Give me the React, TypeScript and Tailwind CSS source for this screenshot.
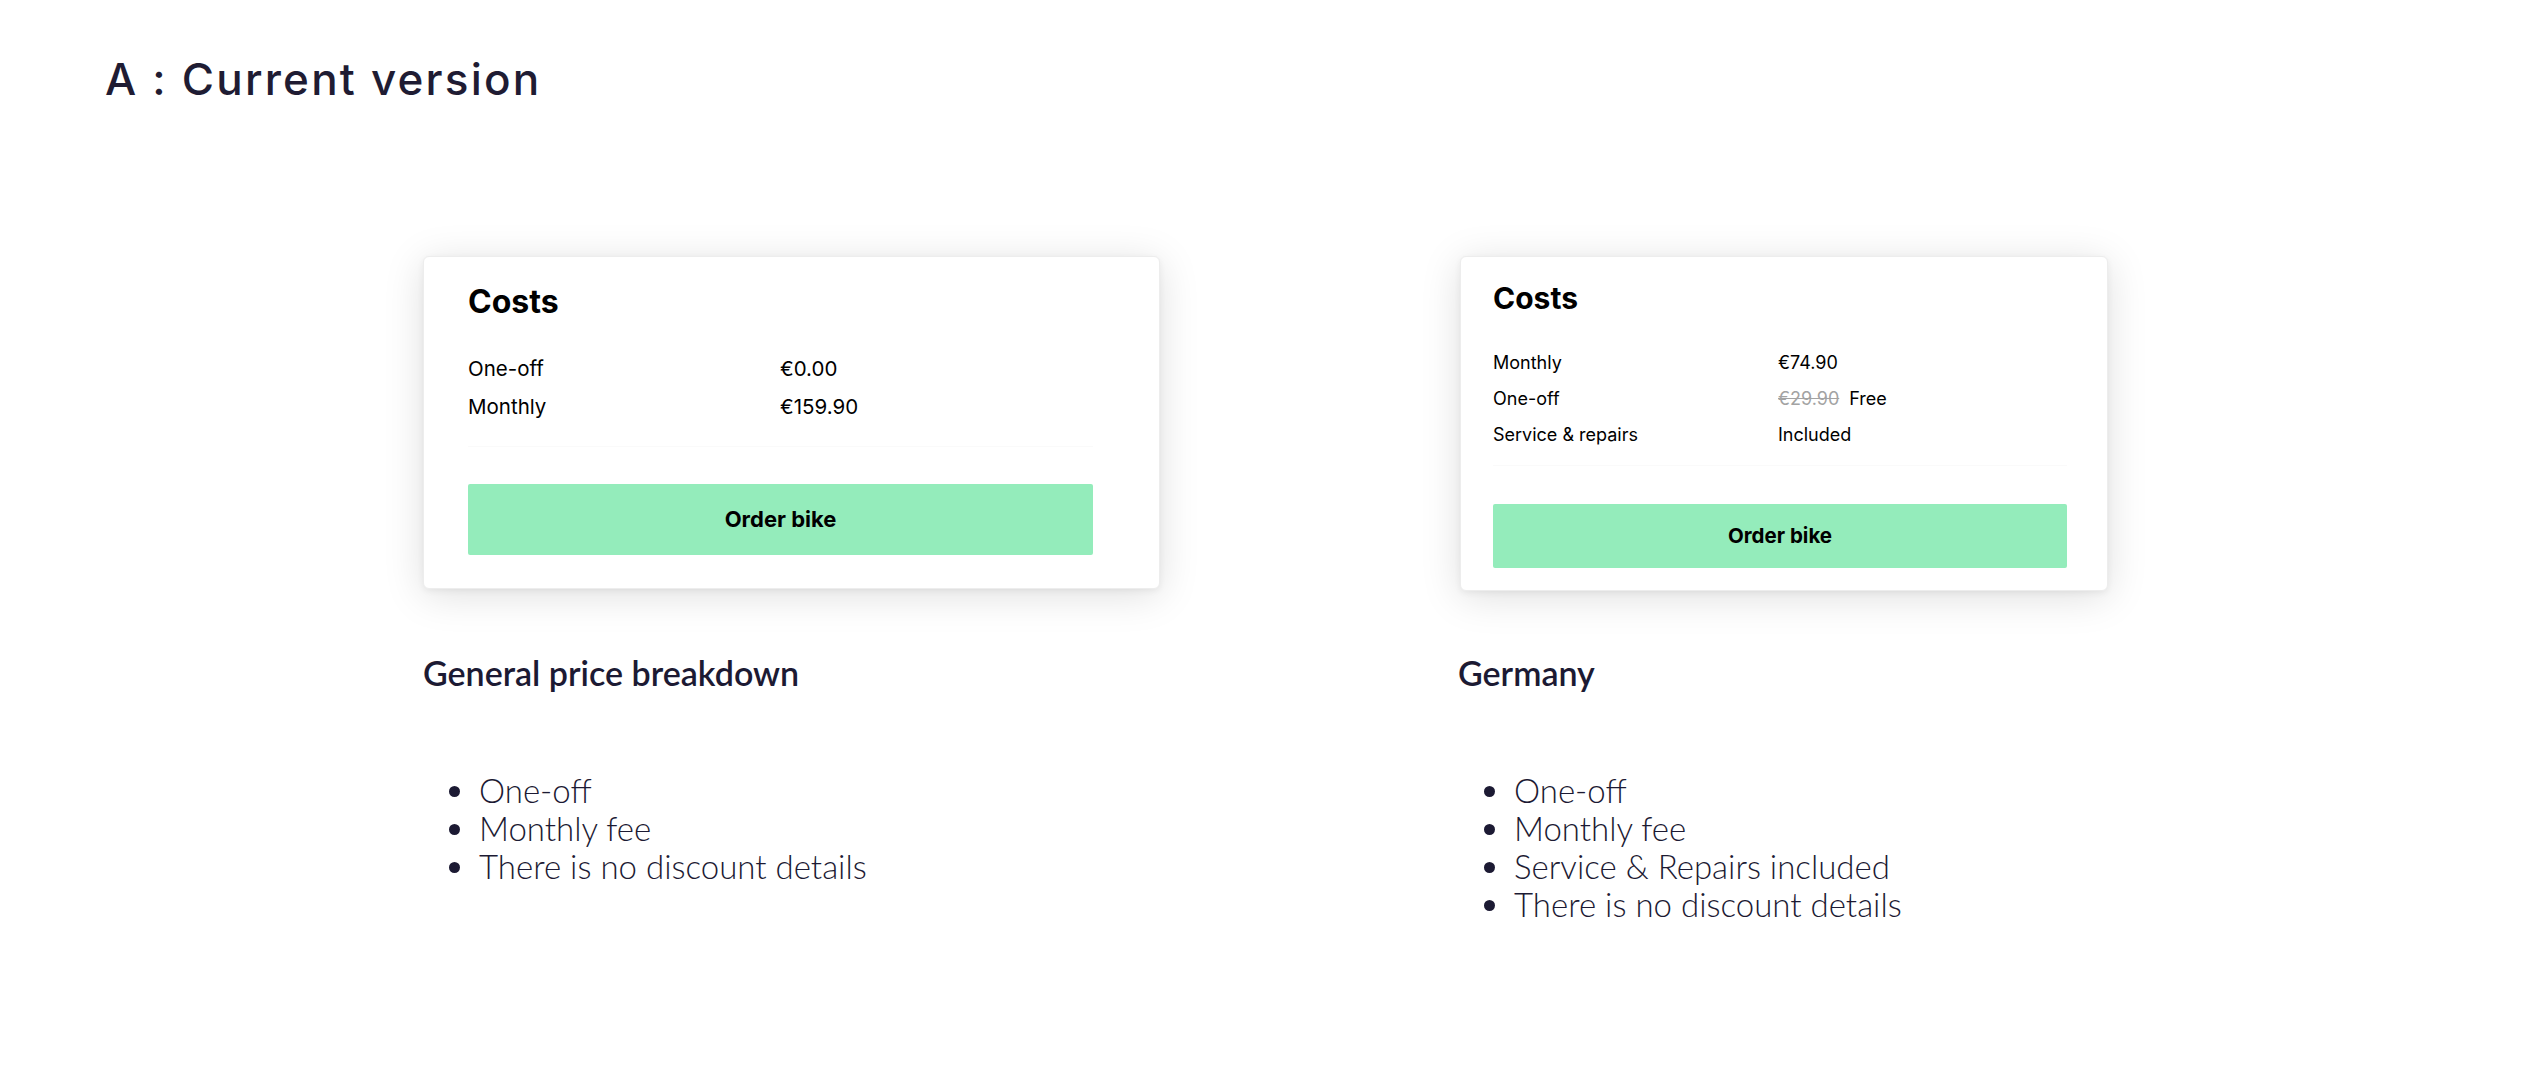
import React from "react";

const cardFont = { fontFamily: "Inter, 'Liberation Sans', sans-serif" };
const noteFont = { fontFamily: "Lato, 'Open Sans', sans-serif" };

type Row = { label: string; value: React.ReactNode };

const general: Row[] = [
  { label: "One-off", value: "€0.00" },
  { label: "Monthly", value: "€159.90" },
];

const germany: Row[] = [
  { label: "Monthly", value: "€74.90" },
  {
    label: "One-off",
    value: (
      <>
        <span className="text-[#a3a3a3] line-through">€29.90</span>
        <span className="ml-[10px]">Free</span>
      </>
    ),
  },
  { label: "Service & repairs", value: "Included" },
];

function Notes({ title, items }: { title: string; items: string[] }) {
  return (
    <div style={noteFont} className="text-[#1c1a33]">
      <h3 className="text-[34px] font-semibold leading-[40px]">{title}</h3>
      <ul className="mt-[78px] list-disc pl-[55px] text-[33px] font-light leading-[38px]">
        {items.map((i) => (
          <li key={i} className="pl-[1px]">
            {i}
          </li>
        ))}
      </ul>
    </div>
  );
}

export default function App() {
  return (
    <div className="h-[1078px] w-[2532px] overflow-hidden bg-white">
      {/* Title */}
      <h1
        className="pl-[105px] pt-[58px] text-[44px] font-medium leading-[43px] tracking-[2.2px] text-[#1f1c33]"
        style={cardFont}
      >
        A : Current version
      </h1>

      <div className="mt-[155px] flex pl-[423px]" style={cardFont}>
        {/* Column A */}
        <div className="w-[1035px]">
          <div className="h-[333px] w-[737px] rounded-[6px] border border-[#ededed] bg-white pl-[44px] pt-[29px] text-black shadow-[0_6px_40px_rgba(0,0,0,0.13),0_2px_6px_rgba(0,0,0,0.06)]">
            <h2 className="text-[32px] font-bold leading-[32px]">Costs</h2>
            <div className="mt-[32px]">
              {general.map((r) => (
                <div key={r.label} className="flex text-[20.5px] leading-[38px]">
                  <span className="w-[312px]">{r.label}</span>
                  <span>{r.value}</span>
                </div>
              ))}
            </div>
            <div className="mt-[20px] h-px w-[625px] bg-[#fafafa]" />
            <button className="mt-[37px] h-[71px] w-[625px] rounded-[2px] bg-[#94ecbb] text-[22px] font-bold text-black">
              Order bike
            </button>
          </div>
          <div className="mt-[64px]">
            <Notes
              title="General price breakdown"
              items={["One-off", "Monthly fee", "There is no discount details"]}
            />
          </div>
        </div>

        {/* Column B */}
        <div className="w-[700px]">
          <div className="ml-[2px] h-[335px] w-[648px] rounded-[6px] border border-[#ededed] bg-white pl-[32px] pt-[26px] text-black shadow-[0_6px_40px_rgba(0,0,0,0.13),0_2px_6px_rgba(0,0,0,0.06)]">
            <h2 className="text-[30px] font-bold leading-[30px]">Costs</h2>
            <div className="mt-[32px]">
              {germany.map((r) => (
                <div key={r.label} className="flex text-[18px] leading-[36px]">
                  <span className="w-[285px]">{r.label}</span>
                  <span>{r.value}</span>
                </div>
              ))}
            </div>
            <div className="mt-[12px] h-px w-[574px] bg-[#fafafa]" />
            <button className="mt-[38px] h-[64px] w-[574px] rounded-[2px] bg-[#94ecbb] text-[20.5px] font-bold text-black">
              Order bike
            </button>
          </div>
          <div className="mt-[62px]">
            <Notes
              title="Germany"
              items={[
                "One-off",
                "Monthly fee",
                "Service & Repairs included",
                "There is no discount details",
              ]}
            />
          </div>
        </div>
      </div>
    </div>
  );
}
